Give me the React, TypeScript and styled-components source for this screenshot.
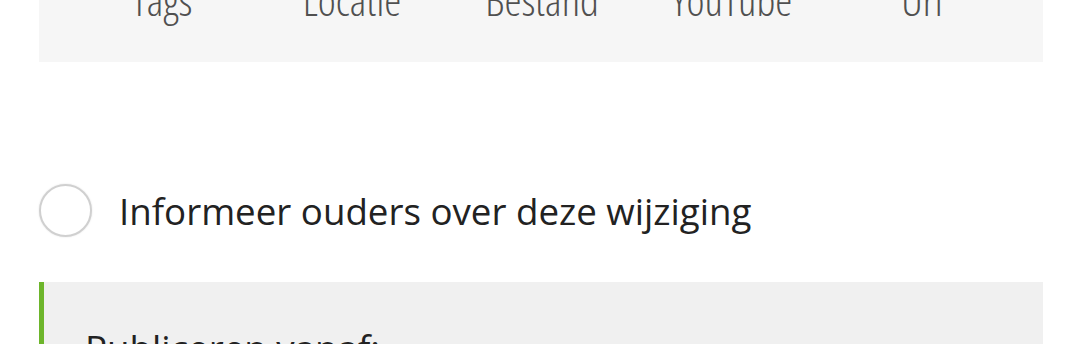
import styled, { createGlobalStyle } from "styled-components";

const GlobalStyle = createGlobalStyle`
  html, body {
    margin: 0;
    padding: 0;
    background: #ffffff;
    font-family: "Open Sans", "Noto Sans", sans-serif;
    overflow: hidden;
  }
`;

const Page = styled.div`
  padding: 0 37px 0 39px;
  height: 344px;
  overflow: hidden;
`;

const MediaBar = styled.div`
  display: grid;
  grid-template-columns: repeat(5, 190px);
  padding: 0 0 42px 28px;
  margin-top: -20px;
  background: #f6f6f6;
`;

const MediaLabel = styled.div`
  text-align: center;
  font-size: 43px;
  font-weight: 350;
  font-stretch: 75%;
  line-height: 40px;
  color: #505050;
`;

const OptionRow = styled.label`
  display: flex;
  align-items: center;
  gap: 27px;
  margin-top: 122px;
  cursor: pointer;
`;

const Radio = styled.span`
  box-sizing: border-box;
  width: 53px;
  height: 53px;
  border-radius: 50%;
  border: 2px solid #d0d0d0;
  box-shadow: 0 0 2px rgba(0, 0, 0, 0.12);
  background: #ffffff;
  flex-shrink: 0;
`;

const OptionText = styled.span`
  font-size: 36.7px;
  color: #222222;
`;

const PublishPanel = styled.div`
  margin-top: 45px;
  background: #f0f0f0;
  border-left: 5px solid #6db52b;
  padding: 44px 0 20px 41px;
`;

const PanelTitle = styled.div`
  font-size: 36.7px;
  color: #222222;
  line-height: 44px;
`;

const labels = ["Tags", "Locatie", "Bestand", "YouTube", "Url"];

export default function App() {
  return (
    <>
      <GlobalStyle />
      <Page>
        <MediaBar>
          {labels.map((l) => (
            <MediaLabel key={l}>{l}</MediaLabel>
          ))}
        </MediaBar>
        <OptionRow>
          <Radio />
          <OptionText>Informeer ouders over deze wijziging</OptionText>
        </OptionRow>
        <PublishPanel>
          <PanelTitle>Publiceren vanaf:</PanelTitle>
        </PublishPanel>
      </Page>
    </>
  );
}
